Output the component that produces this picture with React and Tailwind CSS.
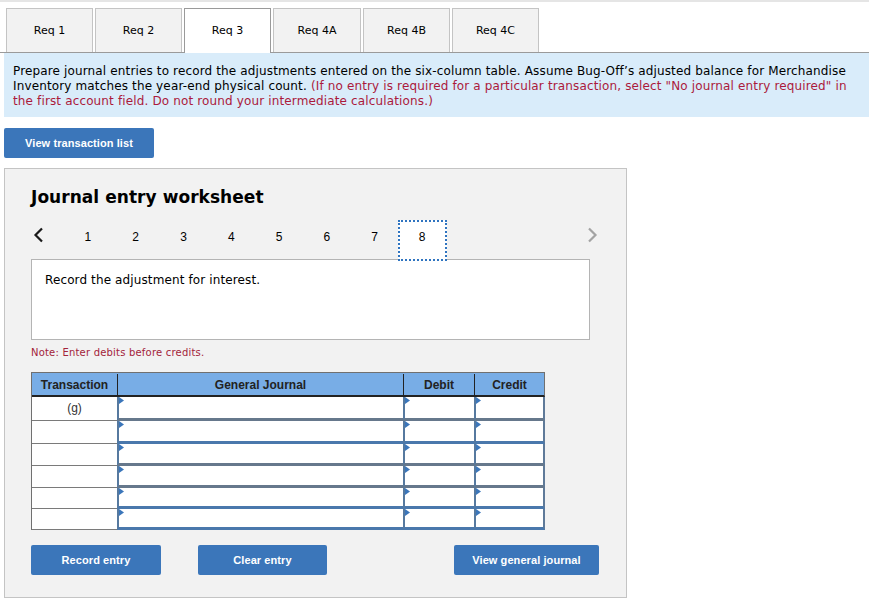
import React from 'react';

const tabs = ['Req 1', 'Req 2', 'Req 3', 'Req 4A', 'Req 4B', 'Req 4C'];
const pages = [1, 2, 3, 4, 5, 6, 7, 8];
const rows = [
  { label: '(g)', h: 'h-[24px]', line: 'border-b-[#66788c]' },
  { label: '', h: 'h-[23px]', line: 'border-b-[#4a78ac]' },
  { label: '', h: 'h-[22px]', line: 'border-b-[#66788c]' },
  { label: '', h: 'h-[22px]', line: 'border-b-[#66788c]' },
  { label: '', h: 'h-[21px]', line: 'border-b-[#4a78ac]' },
  { label: '', h: 'h-[21px]', line: 'border-b-[#4a78ac]' },
];

const Marker = () => (
  <svg className="absolute left-0 top-0" width="5" height="7" viewBox="0 0 5 7">
    <path d="M0 0 L5 3.5 L0 7 Z" fill="#3b76ba" />
  </svg>
);

const InputCell = ({ width, line, last }) => (
  <div className={`relative ${width} h-full bg-white border-l-2 border-l-[#56799f] border-b-[3px] ${line} ${last ? 'border-r-2 border-r-[#5f7a99]' : ''}`}>
    <Marker />
  </div>
);

const BlueButton = ({ children, className }) => (
  <button className={`h-[30px] bg-[#3b76ba] rounded-[2px] text-white text-[11px] tracking-[0.08px] font-bold font-['Liberation_Sans',sans-serif] ${className}`}>
    {children}
  </button>
);

export default function App() {
  return (
    <div className="w-[872px] h-[599px] bg-white font-['DejaVu_Sans',sans-serif] text-black overflow-hidden">
      <div className="w-[869px] h-[2px] bg-[#e5e5e5]" />

      {/* Req tabs */}
      <div className="w-[869px] h-[51px] pt-[6px] pl-[6px] flex gap-[2px] border-b border-[#9a9a9a]">
        {tabs.map((t, i) => (
          <div
            key={t}
            className={`${i === 3 ? 'w-[88px]' : 'w-[87px]'} flex items-center justify-center text-[11px] border border-b-0 ${
              i === 2 ? 'bg-white border-[#9a9a9a] h-[45px] pt-[1px] relative z-10' : 'bg-[#f2f2f2] border-[#c4c4c4] pt-[2px]'
            }`}
          >
            {t}
          </div>
        ))}
      </div>

      <div className="ml-[4px] w-[865px] h-[64px] bg-[#d9ecfa] pl-[9px] pr-[15px] pt-[11px] text-[12px] leading-[15px] tracking-[0.14px]">
        Prepare journal entries to record the adjustments entered on the six-column table. Assume Bug-Off’s adjusted balance for Merchandise Inventory matches the year-end physical count.{' '}
        <span className="text-[#ab1a3c]">
          (If no entry is required for a particular transaction, select "No journal entry required" in the first account field. Do not round your intermediate calculations.)
        </span>
      </div>

      <BlueButton className="ml-[4px] mt-[11px] w-[150px] block">View transaction list</BlueButton>

      {/* Worksheet */}
      <div className="ml-[4px] mt-[10px] w-[623px] h-[430px] bg-[#f2f2f2] border border-[#c4c4c4] pl-[26px] pt-[18px]">
        <h2 className="text-[17px] leading-[21px] font-bold tracking-[0.05px]">Journal entry worksheet</h2>

        <div className="relative mt-[12px] h-[39px] w-[559px] flex items-start font-['Liberation_Sans',sans-serif] text-[12px]">
          <svg className="mt-[7px] ml-[2px] mr-[20px]" width="11" height="16" viewBox="0 0 11 16">
            <path d="M9 1.5 L2.5 8 L9 14.5" fill="none" stroke="#1a1a1a" strokeWidth="2.2" />
          </svg>
          {pages.map((p) => (
            <div
              key={p}
              className={`h-[41px] flex justify-center shrink-0 ${
                p === 8 ? 'w-[49px] -ml-px pt-[6px] bg-white border-2 border-dotted border-[#2f74c0] relative z-10' : 'w-[47.8px] pt-[8px]'
              }`}
            >
              {p}
            </div>
          ))}
          <svg className="absolute right-[-8px] top-[7px]" width="11" height="16" viewBox="0 0 11 16">
            <path d="M2 1.5 L8.5 8 L2 14.5" fill="none" stroke="#a3a3a3" strokeWidth="2.2" />
          </svg>
        </div>

        <div className="w-[559px] h-[81px] bg-white border border-[#b4b4b4] px-[13px] pt-[13px] text-[12px] leading-[15px] tracking-[0.12px]">
          Record the adjustment for interest.
        </div>

        <p className="mt-[6px] text-[10px] leading-[13px] tracking-[0.2px] text-[#a3233a]">Note: Enter debits before credits.</p>

        {/* Entry table */}
        <div className="mt-[13px] w-[514px] font-['Liberation_Sans',sans-serif] text-[12px] border-l border-[#707070]">
          <div className="flex h-[25px] pt-[1px] bg-[#78ade6] border-t border-r border-[#707070] border-b-2 border-b-[#222] font-bold text-[#222]">
            <div className="w-[86px] flex items-center justify-center border-r border-[#222]">Transaction</div>
            <div className="w-[286px] flex items-center justify-center border-r border-[#222]">General Journal</div>
            <div className="w-[71px] flex items-center justify-center border-r border-[#222]">Debit</div>
            <div className="flex-1 flex items-center justify-center">Credit</div>
          </div>
          {rows.map((r, i) => (
            <div key={i} className={`flex ${r.h}`}>
              <div className="w-[85px] pb-[2px] bg-white flex items-center justify-center text-[#333] border-b border-[#7a7a7a]">
                {r.label}
              </div>
              <InputCell width="w-[286px]" line={r.line} />
              <InputCell width="w-[71px]" line={r.line} />
              <InputCell width="flex-1" line={r.line} last />
            </div>
          ))}
        </div>

        <div className="mt-[15px] w-[568px] flex">
          <BlueButton className="w-[130px]">Record entry</BlueButton>
          <BlueButton className="ml-[37px] w-[129px]">Clear entry</BlueButton>
          <BlueButton className="ml-auto w-[145px]">View general journal</BlueButton>
        </div>
      </div>
    </div>
  );
}
